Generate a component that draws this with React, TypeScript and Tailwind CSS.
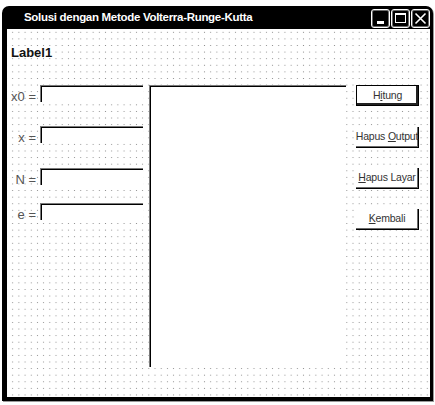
import React from 'react';

const font = { fontFamily: '"Liberation Sans", Arial, sans-serif' };

const fields = [
  { label: 'x0 =', mt: 'mt-0' },
  { label: 'x =', mt: 'mt-[22px]' },
  { label: 'N =', mt: 'mt-[23px]' },
  { label: 'e =', mt: 'mt-[16px]' },
];

// caption with an underlined accelerator letter
const buttons = [
  { pre: 'H', key: 'i', post: 'tung', main: true, mt: 'mt-0' },
  { pre: 'Hapus ', key: 'O', post: 'utput', main: false, mt: 'mt-[21px]' },
  { pre: '', key: 'H', post: 'apus Layar', main: false, mt: 'mt-[20px]' },
  { pre: '', key: 'K', post: 'embali', main: false, mt: 'mt-[20px]' },
];

const TitleButton = ({ children }: { children: React.ReactNode }) => (
  <div className="w-[19px] h-[19px] rounded-[3px] border border-white flex items-center justify-center shadow-[inset_0_0_0_1px_#6b6b6b]">
    {children}
  </div>
);

const App = () => {
  return (
    <div className="w-[435px] h-[405px] bg-white pt-[6px] pl-[2px]" style={font}>
      <div className="w-[431px] h-[395px] bg-black rounded-t-[7px] flex flex-col pl-[5px] pr-[3px] pb-[4px] shadow-[1px_1px_0_#9a9a9a]">
        {/* title bar */}
        <div className="h-[23px] flex items-center -ml-[5px] -mr-[3px] pl-[22px] pr-[3px]">
          <span className="text-white font-bold text-[11.5px] tracking-[-0.3px] flex-1 pt-[1px]">
            Solusi dengan Metode Volterra-Runge-Kutta
          </span>
          <div className="flex gap-[1px] pt-[1px]">
            <TitleButton>
              <div className="w-[7px] h-[3px] bg-white mt-[8px]" />
            </TitleButton>
            <TitleButton>
              <div className="w-[11px] h-[10px] border border-white border-t-2" />
            </TitleButton>
            <TitleButton>
              <svg width="13" height="13" viewBox="0 0 13 13">
                <path d="M1.5 1.5 L11.5 11.5 M11.5 1.5 L1.5 11.5" stroke="white" strokeWidth="1.6" />
              </svg>
            </TitleButton>
          </div>
        </div>

        {/* form area with the design grid */}
        <div className="flex-1 bg-white bg-[radial-gradient(circle,#8c8c8c_0.6px,transparent_0.9px)] [background-size:6.2px_6.6px] [background-position:2.6px_0px] pt-[16px]">
          <div className="pl-[4px] text-[13px] leading-[15px] font-bold text-[#111]">Label1</div>

          <div className="flex items-start mt-[25px]">
            {/* input fields */}
            <div className="flex flex-col w-[136px]">
              {fields.map((f) => (
                <div key={f.label} className={`flex items-start ${f.mt}`}>
                  <span className="w-[33px] text-right pr-[4px] text-[13px] leading-[15px] pt-[4px] text-[#555]">
                    {f.label}
                  </span>
                  <div className="w-[103px] h-[17px] bg-white border-t border-l border-[#7a7a7a] shadow-[inset_1px_1px_0_#000]" />
                </div>
              ))}
            </div>

            {/* output area */}
            <div className="ml-[6px] w-[197px] h-[282px] bg-white border-t border-l border-[#7a7a7a] shadow-[inset_1px_1px_0_#000]" />

            {/* command buttons */}
            <div className="ml-[10px] w-[63px] flex flex-col">
              {buttons.map((b) => (
                <div
                  key={b.pre + b.key + b.post}
                  className={`h-[21px] bg-white flex items-center justify-center ${b.mt} ${
                    b.main
                      ? 'border border-black shadow-[inset_-2px_-2px_0_#222]'
                      : 'border-r border-b border-black shadow-[inset_-1px_-1px_0_#6b6b6b]'
                  }`}
                >
                  <span className="whitespace-nowrap text-[10.5px] tracking-[-0.2px] text-[#333]">
                    {b.pre}
                    <span className="underline">{b.key}</span>
                    {b.post}
                  </span>
                </div>
              ))}
            </div>
          </div>
        </div>
      </div>
    </div>
  );
};

export default App;
